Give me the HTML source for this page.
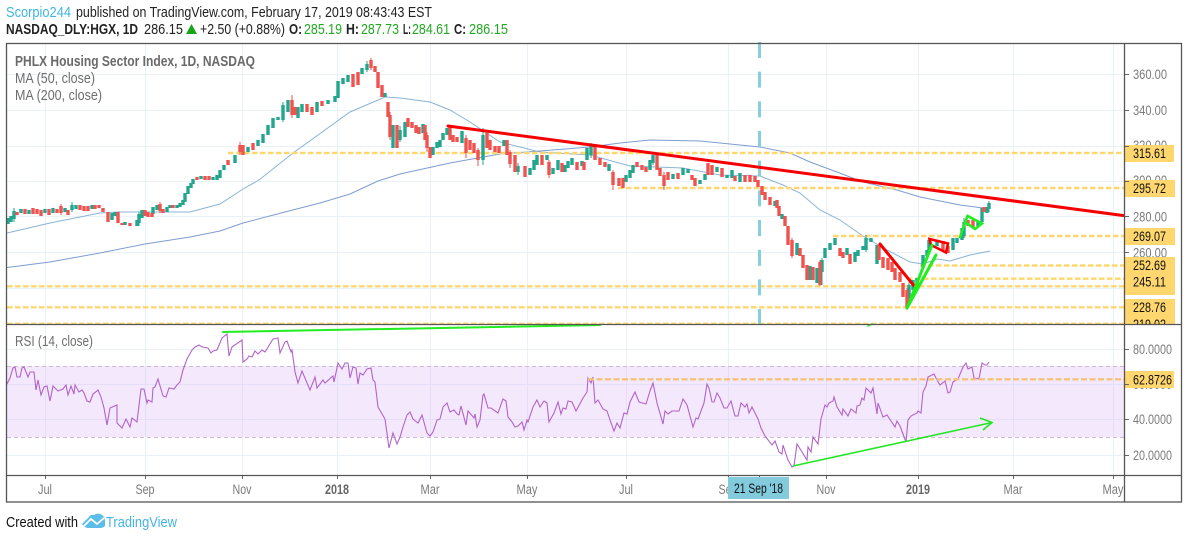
<!DOCTYPE html>
<html><head><meta charset="utf-8"><title>HGX</title>
<style>
html,body{margin:0;padding:0;background:#fff;width:1188px;height:539px;overflow:hidden}
svg{display:block}
text{font-family:"Liberation Sans",sans-serif}
.ax{font-size:13.5px;fill:#7b7b7b}
.lb{font-size:13.5px;fill:#111}
.tm{font-size:13.5px;fill:#7b7b7b;text-anchor:middle}
.lg{font-size:14.5px;fill:#6e6e6e}
.h{font-size:15px;fill:#222}
.hb{font-size:15px;fill:#222;font-weight:bold}
.hg{font-size:15px;fill:#22a822}
</style></head><body>
<svg width="1188" height="539" viewBox="0 0 1188 539" xmlns="http://www.w3.org/2000/svg">
<rect width="1188" height="539" fill="#fff"/>
<text x="6" y="17" class="h" style="fill:#3fb4e6" textLength="65" lengthAdjust="spacingAndGlyphs">Scorpio244</text>
<text x="76" y="17" class="h" textLength="356" lengthAdjust="spacingAndGlyphs">published on TradingView.com, February 17, 2019 08:43:43 EST</text>
<text x="6" y="34" class="hb" textLength="132" lengthAdjust="spacingAndGlyphs">NASDAQ_DLY:HGX, 1D</text>
<text x="144" y="34" class="h" textLength="39" lengthAdjust="spacingAndGlyphs">286.15</text>
<path d="M191.500 24L197 34H186Z" fill="#16a516"/>
<text x="200" y="34" class="h" textLength="85" lengthAdjust="spacingAndGlyphs">+2.50 (+0.88%)</text>
<text x="289" y="34" class="hb" textLength="13" lengthAdjust="spacingAndGlyphs">O:</text>
<text x="304" y="34" class="hg" textLength="38" lengthAdjust="spacingAndGlyphs">285.19</text>
<text x="346" y="34" class="hb" textLength="13" lengthAdjust="spacingAndGlyphs">H:</text>
<text x="361" y="34" class="hg" textLength="38" lengthAdjust="spacingAndGlyphs">287.73</text>
<text x="403" y="34" class="hb" textLength="8" lengthAdjust="spacingAndGlyphs">L:</text>
<text x="412" y="34" class="hg" textLength="38" lengthAdjust="spacingAndGlyphs">284.61</text>
<text x="454" y="34" class="hb" textLength="12" lengthAdjust="spacingAndGlyphs">C:</text>
<text x="469" y="34" class="hg" textLength="39" lengthAdjust="spacingAndGlyphs">286.15</text>

<g stroke="#e9f2f6" stroke-width="1" fill="none">
<path d="M45.500 44V475M145.500 44V475M242.500 44V475M337.500 44V475M430.500 44V475M527.500 44V475M626.500 44V475M728.500 44V475M826.500 44V475M918.500 44V475M1013.500 44V475M1113.500 44V475"/>
<path d="M7 74.500H1124M7 110.500H1124M7 146.500H1124M7 181.500H1124M7 216.500H1124M7 252.500H1124M7 288.500H1124M7 349.500H1124M7 384.500H1124M7 419.500H1124M7 455.500H1124"/>
</g>
<rect x="7" y="366" width="1117" height="71" fill="#d9b3f7" fill-opacity=".3"/>
<path d="M7 366.500H1124M7 437.500H1124" stroke="#cdb9d8" stroke-width="1" stroke-dasharray="4 3" fill="none"/>

<path d="M7 233L50 223L100 213L117 212L150 212L190 212L220 204L243 189L259 180L293 153L350 112L385 97L400 98L430 102L450 110L470 122L500 142L540 152L590 155L630 166L683 168L720 175L760 176L783 185L800 193L820 210L840 220L863 236L887 250L910 262L923 264L937 259L950 261L970 255L990 251" fill="none" stroke="#8ab4d6" stroke-width="1"/>
<path d="M7 267.500L50 262L100 253L145 244L190 237L220 231L243 223L285 212L320 203L350 194L378 181L400 174L450 163L500 154L540 151L590 147L620 143L650 140L700 141L730 144L760 147L790 153L810 162L837 172L863 182L897 190L920 197L960 205L983 208" fill="none" stroke="#7f9dd0" stroke-width="1"/>

<g stroke="#ffd76e" stroke-width="2.400" stroke-dasharray="5.500 2.500" fill="none">
<path d="M228 153H1124M618 188H1124M833 236H1124M920 265.500H1124M907 278.700H1124M7 286.300H1124M7 307.300H1124M7 323.800H1124"/>
</g>

<path d="M759.500 42V324" fill="none" stroke="#86cfdf" stroke-width="3" stroke-dasharray="16 13.670"/>

<g fill="none" stroke-width="3.400">
<path stroke="#22a68e" d="M8 218V224M11 216V222M14 211V219M21 209V213M29 210V214M45 209V213M53 208V213M65 208V212M72 205V210M76 205V209M92 205V209M112 213V220M115 212V216M125 222V225M137 220V226M139 214V223M142 210V218M153 207V214M157 205V210M167 207V212M170 205V208M177 205V208M180 203V207M183 200V205M185 193V202M188 186V194M191 183V188M193 179V184M201 176V179M213 177V180M217 175V180M220 170V178M224 165V170M235 155V163M248 147V152M258 140V146M263 134V143M268 125V135M273 118V128M278 117V120M283 105V120M288 100V112M298 107V118M302 104V112M317 102V112M328 100V104M335 96V102M338 81V98M343 78V84M348 75V82M362 68V74M367 64V70M385 93V97M393 125V148M400 130V140M405 122V137M423 124V133M433 147V155M437 142V148M440 140V147M443 133V140M447 128V135M462 131V143M483 135V160M504 140V146M518 166V172M530 168V175M534 160V170M537 155V165M547 155V160M553 168V174M558 160V170M565 165V172M568 161V168M572 158V165M582 161V166M587 148V160M591 146V155M609 164V171M626 175V182M630 170V178M633 165V173M650 160V170M653 155V163M673 174V179M683 168V175M688 169V173M700 180V184M705 174V180M717 167V172M727 175V178M732 170V178M740 173V182M775 201V206M782 214V219M797 243V255M810 266V280M817 268V283M822 260V272M825 248V258M830 243V250M835 238V245M847 248V255M855 252V262M858 250V256M863 246V250M866 238V250M871 238V242M877 245V264M909 285V302M913 280V290M917 278V288M923 255V268M927 250V256M929 240V252M937 240V246M953 238V250M957 238V243M962 228V240M964 222V236M978 222V226M982 208V222M987 207V213M989 203V209"/>
<path stroke="#ef5350" d="M17 212V215M25 209V214M33 208V214M37 209V214M41 210V216M49 209V215M57 209V213M61 206V213M68 210V215M80 205V210M84 206V211M88 206V211M95 205V209M99 205V208M103 208V212M108 212V222M118 212V223M122 223V225M130 223V226M145 210V216M148 212V217M152 213V217M160 204V211M163 209V213M173 205V208M197 177V180M205 176V180M209 176V180M228 160V165M240 145V152M243 145V155M253 143V150M292 100V115M295 107V115M307 104V112M312 107V115M322 101V106M353 74V87M358 72V85M371 60V68M375 66V72M378 72V88M382 85V97M388 102V117M390 115V137M397 125V148M408 118V127M412 122V128M416 125V133M419 127V134M425 125V140M427 135V148M430 147V158M450 127V140M453 135V142M457 137V142M466 138V153M470 140V150M474 143V153M478 150V160M487 133V148M490 140V150M495 146V152M499 146V153M507 140V155M510 152V164M515 155V172M525 166V177M542 155V165M549 162V175M562 163V172M577 162V170M584 162V170M595 146V160M600 158V165M605 162V167M613 172V185M619 178V186M623 178V188M637 162V167M642 165V170M646 167V172M657 155V170M660 168V176M664 175V186M668 172V180M678 173V179M692 175V180M695 178V186M708 163V175M712 165V175M722 168V177M735 176V181M745 175V182M750 175V182M755 176V182M758 180V187M762 186V195M765 192V200M770 197V205M777 200V208M779 206V216M785 216V226M788 226V245M792 240V256M800 248V256M803 255V268M807 265V280M813 267V280M820 262V285M840 248V256M843 252V258M850 254V264M879 245V260M883 257V268M888 258V270M892 262V272M895 268V280M900 272V282M903 283V297M907 290V308M943 241V250M948 246V253M968 220V226M973 220V228M984 207V212"/>
</g>
<g fill="none" stroke-width="1">
<path stroke="#22a68e" d="M14 208V222M72 202V212M139 212V226M283 102V122M367 61V72M400 126V142M483 128V165M518 163V175M591 143V158M653 152V165M822 258V285M866 235V252M909 282V306M964 218V238M989 201V212"/>
<path stroke="#ef5350" d="M61 204V215M160 202V213M240 142V155M292 95V118M371 58V70M390 112V140M427 132V152M466 135V158M478 148V166M510 150V168M549 160V178M613 170V190M664 172V190M792 238V258M820 260V286M907 288V310"/>
</g>

<g fill="none" stroke="#f40000" stroke-linecap="round">
<path d="M448 126L1123 215.500" stroke-width="3"/>
<path d="M880 244L915 287" stroke-width="3"/>
<path d="M931 245L929.500 239L948 243.500L946 252.500L931 245" stroke-width="2.600"/>
</g>
<g fill="none" stroke="#20ee20" stroke-linecap="round">
<path d="M907 308L932 245M907 308L936 255" stroke-width="3"/>
<path d="M960 237L966 220L967.500 216L982 223.500L975 229L965 222" stroke-width="2.600"/>
<path d="M223 332L600 325" stroke-width="2"/>
<path d="M868 326L872 324" stroke-width="1.500"/>
</g>

<path d="M7 384L10 378L13 368L15 367L17 377L20 377L22 368L24 367L28 377L30 372L34 372L36 390L38 380L41 395L44 387L47 386L50 401L53 386L58 391L63 389L66 385L68 395L71 386L74 394L75 385L79 392L82 390L84 393L87 401L90 402L93 394L97 391L98 390L101 397L104 408L107 425L110 408L117 405L117 423L122 428L126 419L130 427L132 418L137 422L141 389L144 389L147 403L148 400L152 402L153 388L155 387L158 379L163 396L166 397L169 388L174 389L177 385L180 382L183 370L187 359L192 350L195 347L199 345L202 347L208 348L211 353L213 351L217 350L222 338L227 334L229 356L232 347L242 340L243 362L247 359L249 356L252 357L255 351L258 354L262 350L265 352L273 339L278 338L280 353L285 342L287 341L291 352L292 350L295 372L298 383L302 371L310 390L315 377L317 388L323 380L325 383L333 376L334 382L338 363L342 369L345 363L348 363L350 378L353 367L356 368L358 384L360 373L363 375L367 369L371 368L373 380L375 382L378 407L385 419L389 448L393 433L397 444L400 437L403 427L407 415L410 412L413 419L418 423L422 415L427 433L430 436L433 432L437 420L440 419L443 407L447 403L450 412L454 410L457 414L459 415L461 406L466 425L468 411L474 418L475 414L477 427L480 420L483 395L484 394L488 408L491 408L498 413L503 399L506 401L508 417L512 422L515 427L518 426L522 422L524 430L527 420L528 422L533 407L537 400L540 407L544 401L547 403L549 422L554 413L558 402L561 414L563 408L566 409L568 401L572 402L576 411L583 398L587 392L588 378L591 383L593 377L595 403L598 400L603 409L607 411L610 420L614 431L617 423L620 428L624 413L627 414L630 402L635 392L639 402L646 404L650 391L653 383L657 403L663 424L665 411L668 414L672 411L679 411L683 399L687 405L693 427L696 418L698 419L704 403L707 384L709 388L712 402L714 402L717 393L720 398L724 408L727 408L731 401L735 416L738 416L741 403L745 407L747 404L749 413L752 407L758 419L761 428L765 436L772 445L775 441L779 452L782 454L783 445L788 460L792 467L794 466L797 444L807 460L808 447L811 452L813 437L818 444L821 419L825 405L827 407L829 403L833 401L834 397L837 407L842 415L843 409L848 416L851 409L856 413L857 406L860 405L862 398L864 400L866 388L871 393L873 388L877 414L878 403L883 417L887 415L895 427L897 421L900 426L906 442L908 420L911 416L917 413L918 411L921 413L923 392L926 386L928 377L934 374L937 380L940 385L945 381L948 393L950 392L953 382L958 379L963 367L966 363L968 369L972 367L974 378L979 379L982 363L985 365L987 365L989 362" fill="none" stroke="#b264c8" stroke-width="1.100"/>
<path d="M588 379.300H1124" stroke="#f6c27a" stroke-width="2.400" stroke-dasharray="6 2.500" fill="none"/>
<g fill="none" stroke="#22e622" stroke-width="1.600">
<path d="M793 466L992 422.500"/>
<path d="M980 418L992 422.500L983 430"/>
</g>

<rect x="1125" y="44" width="56" height="431" fill="#fff"/>
<text x="1133" y="79" class="ax" textLength="34" lengthAdjust="spacingAndGlyphs">360.00</text>
<text x="1133" y="115" class="ax" textLength="34" lengthAdjust="spacingAndGlyphs">340.00</text>
<text x="1133" y="150" class="ax" textLength="34" lengthAdjust="spacingAndGlyphs">320.00</text>
<text x="1133" y="185" class="ax" textLength="34" lengthAdjust="spacingAndGlyphs">300.00</text>
<text x="1133" y="221.500" class="ax" textLength="34" lengthAdjust="spacingAndGlyphs">280.00</text>
<text x="1133" y="257.500" class="ax" textLength="34" lengthAdjust="spacingAndGlyphs">260.00</text>
<g fill="#ffd76e">
<rect x="1124" y="145" width="50" height="17"/>
<rect x="1124" y="180" width="51" height="17"/>
<rect x="1124" y="228" width="51" height="17"/>
<rect x="1124" y="257" width="51" height="17"/>
<rect x="1124" y="270" width="51" height="25"/>
<rect x="1124" y="299" width="51" height="25"/>
</g>
<text x="1133" y="158" class="lb" textLength="33" lengthAdjust="spacingAndGlyphs">315.61</text>
<text x="1133" y="193" class="lb" textLength="33" lengthAdjust="spacingAndGlyphs">295.72</text>
<text x="1133" y="241" class="lb" textLength="33" lengthAdjust="spacingAndGlyphs">269.07</text>
<text x="1133" y="270" class="lb" textLength="33" lengthAdjust="spacingAndGlyphs">252.69</text>
<text x="1133" y="286.500" class="lb" textLength="33" lengthAdjust="spacingAndGlyphs">245.11</text>
<text x="1133" y="312" class="lb" textLength="33" lengthAdjust="spacingAndGlyphs">228.76</text>
<text x="1133" y="329" class="lb" textLength="33" lengthAdjust="spacingAndGlyphs">219.02</text>
<rect x="1125" y="325" width="56" height="22" fill="#fff"/>
<text x="1133" y="354" class="ax" textLength="39" lengthAdjust="spacingAndGlyphs">80.0000</text>
<text x="1133" y="389" class="ax" textLength="39" lengthAdjust="spacingAndGlyphs">60.0000</text>
<rect x="1124" y="371" width="50" height="17" fill="#ffd76e"/>
<text x="1133" y="384.500" class="lb" textLength="39" lengthAdjust="spacingAndGlyphs">62.8726</text>
<text x="1133" y="424" class="ax" textLength="39" lengthAdjust="spacingAndGlyphs">40.0000</text>
<text x="1133" y="460" class="ax" textLength="39" lengthAdjust="spacingAndGlyphs">20.0000</text>

<path d="M1124 74.500h5M1124 110.500h5M1124 146.500h5M1124 181.500h5M1124 216.500h5M1124 252.500h5M1124 349.500h5M1124 384.500h5M1124 419.500h5M1124 455.500h5M45.500 475v4M145.500 475v4M242.500 475v4M337.500 475v4M430.500 475v4M527.500 475v4M626.500 475v4M728.500 475v4M826.500 475v4M918.500 475v4M1013.500 475v4M1113.500 475v4" stroke="#666" stroke-width="1" fill="none"/>

<text x="15" y="66" style="font-size:14.500px;font-weight:bold;fill:#6a6a6a" textLength="240" lengthAdjust="spacingAndGlyphs">PHLX Housing Sector Index, 1D, NASDAQ</text>
<text x="15" y="83" class="lg" textLength="80" lengthAdjust="spacingAndGlyphs">MA (50, close)</text>
<text x="15" y="100" class="lg" textLength="87" lengthAdjust="spacingAndGlyphs">MA (200, close)</text>
<text x="15" y="346" class="lg" textLength="78" lengthAdjust="spacingAndGlyphs">RSI (14, close)</text>

<text x="45" y="494" class="tm" textLength="14" lengthAdjust="spacingAndGlyphs">Jul</text>
<text x="145" y="494" class="tm" textLength="19" lengthAdjust="spacingAndGlyphs">Sep</text>
<text x="242" y="494" class="tm" textLength="19" lengthAdjust="spacingAndGlyphs">Nov</text>
<text x="337" y="494" class="tm" style="font-weight:bold;fill:#666" textLength="24" lengthAdjust="spacingAndGlyphs">2018</text>
<text x="430" y="494" class="tm" textLength="19" lengthAdjust="spacingAndGlyphs">Mar</text>
<text x="527" y="494" class="tm" textLength="21" lengthAdjust="spacingAndGlyphs">May</text>
<text x="626" y="494" class="tm" textLength="14" lengthAdjust="spacingAndGlyphs">Jul</text>
<text x="728" y="494" class="tm" textLength="19" lengthAdjust="spacingAndGlyphs">Sep</text>
<text x="826" y="494" class="tm" textLength="19" lengthAdjust="spacingAndGlyphs">Nov</text>
<text x="918" y="494" class="tm" style="font-weight:bold;fill:#666" textLength="24" lengthAdjust="spacingAndGlyphs">2019</text>
<text x="1013" y="494" class="tm" textLength="19" lengthAdjust="spacingAndGlyphs">Mar</text>
<text x="1113" y="494" class="tm" textLength="21" lengthAdjust="spacingAndGlyphs">May</text>

<rect x="1124.500" y="476" width="56" height="26" fill="#fff"/>
<g fill="none" stroke="#555" stroke-width="1.300">
<rect x="6.500" y="43.500" width="1175" height="458.500"/>
<path d="M7 324.500H1181M7 475.500H1181M1124.500 43V502"/>
</g>
<path d="M759.500 475v3" stroke="#555"/>
<rect x="728" y="477" width="61" height="22" fill="#82cbdc"/>
<text x="734" y="493" style="font-size:14px;fill:#111" textLength="49" lengthAdjust="spacingAndGlyphs">21 Sep '18</text>

<text x="6" y="527" class="h" style="fill:#111" textLength="72" lengthAdjust="spacingAndGlyphs">Created with</text>
<path d="M82 524L89 517Q91 514 94 515Q97 513 100 514Q104 515 105 520L105 526Q103 528 100 528H88Q85 528 82 524Z" fill="#5bbde8"/>
<path d="M84 526L91 519L97 524L104 518" fill="none" stroke="#fff" stroke-width="1.800"/>
<text x="106" y="527" class="h" style="fill:#46b3e6" textLength="71" lengthAdjust="spacingAndGlyphs">TradingView</text>
</svg>
</body></html>
